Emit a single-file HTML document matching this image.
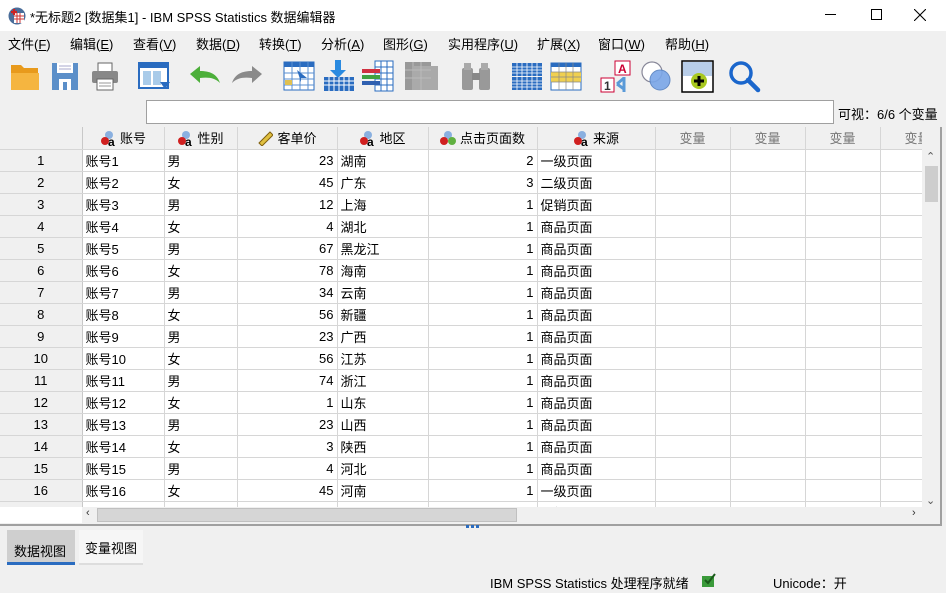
<!DOCTYPE html>
<html><head><meta charset="utf-8"><style>
*{margin:0;padding:0;box-sizing:border-box}
body{width:946px;height:593px;overflow:hidden;background:#f0f0f0;font-family:"Liberation Sans","Noto Sans CJK SC",sans-serif;font-size:13px;color:#000;position:relative}
.a{position:absolute}
#title{left:0;top:0;width:946px;height:31px;background:#fff}
#menu{top:29px;left:0;width:946px;height:24px}
#menu span{position:absolute;top:5px;font-size:13px}
.tb{position:absolute;top:60px}
#grid{left:0;top:127px;width:922px;height:380px;overflow:hidden;background:#fff}
table{border-collapse:collapse;table-layout:fixed;width:940px}
td{height:22px;border-right:1px solid #d6d6d6;border-bottom:1px solid #d6d6d6;padding:0 3px;white-space:nowrap;overflow:hidden;font-size:13px}
td.n{background:#f0f0f0;text-align:center;border-right:1px solid #c8c8c8}
td.r{text-align:right}
tr.h td{background:#f0f0f0;text-align:center;height:22px}
tr.h td.v{color:#777}
.ic{display:inline-block;vertical-align:-3px;margin-right:4px}
</style></head><body>
<div id="title" class="a">
<svg class="a" style="left:8px;top:7px" width="18" height="18"><circle cx="9" cy="9" r="8.5" fill="#4a6d9a"/><rect x="6" y="6" width="10" height="10" fill="#fff"/><path d="M6 9h10M6 12h10M9 6v10M12 6v10" stroke="#c33" stroke-width="1"/><path d="M3 5h6M6 2v6" stroke="#c22" stroke-width="2.2"/></svg>
<span class="a" style="left:30px;top:7px;font-size:13px">*无标题2 [数据集1] - IBM SPSS Statistics 数据编辑器</span>
<span class="a" style="left:825px;top:14px;width:11px;height:1px;background:#000"></span>
<span class="a" style="left:871px;top:9px;width:11px;height:11px;border:1px solid #000"></span>
<svg class="a" style="left:914px;top:9px" width="12" height="12"><path d="M0 0L12 12M12 0L0 12" stroke="#000" stroke-width="1.1"/></svg>
</div>
<div id="menu" class="a">
<span style="left:8px">文件(<u>F</u>)</span><span style="left:70px">编辑(<u>E</u>)</span><span style="left:133px">查看(<u>V</u>)</span><span style="left:196px">数据(<u>D</u>)</span><span style="left:259px">转换(<u>T</u>)</span><span style="left:321px">分析(<u>A</u>)</span><span style="left:383px">图形(<u>G</u>)</span><span style="left:448px">实用程序(<u>U</u>)</span><span style="left:537px">扩展(<u>X</u>)</span><span style="left:598px">窗口(<u>W</u>)</span><span style="left:665px">帮助(<u>H</u>)</span>
</div>
<!-- toolbar -->
<svg class="tb" style="left:10px" width="30" height="32"><path d="M1 5h10l3 3h14v22H1z" fill="#e89a1c"/><path d="M1 13h28v17H1z" fill="#f5b540"/></svg>
<svg class="tb" style="left:51px" width="28" height="32"><rect x="1" y="3" width="26" height="27" fill="#5b8fc9"/><rect x="6" y="3" width="16" height="10" fill="#fff"/><path d="M8 6h12M8 9h12" stroke="#aac"/><rect x="8" y="19" width="12" height="11" fill="#fff"/><rect x="12" y="22" width="4" height="8" fill="#5b8fc9"/></svg>
<svg class="tb" style="left:90px" width="30" height="32"><rect x="8" y="3" width="14" height="9" fill="#fff" stroke="#666"/><rect x="2" y="11" width="26" height="12" rx="2" fill="#888"/><rect x="7" y="19" width="16" height="11" fill="#fff" stroke="#666"/><path d="M9 23h12M9 26h12" stroke="#999"/></svg>
<svg class="tb" style="left:138px" width="33" height="32"><rect x="1" y="3" width="29" height="25" fill="#fff" stroke="#2a6cc0" stroke-width="2"/><rect x="1" y="3" width="29" height="5" fill="#2a6cc0"/><rect x="5" y="11" width="8" height="14" fill="#a9cbe9"/><rect x="15" y="11" width="8" height="14" fill="#a9cbe9"/><path d="M22 22h10l-5 7z" fill="#2a6cc0"/></svg>
<svg class="tb" style="left:188px" width="33" height="32"><path d="M2 14l10-8v5c10 0 17 3 20 12c-5-5-11-6-20-5v5z" fill="#4caf3a"/></svg>
<svg class="tb" style="left:231px" width="33" height="32"><path d="M31 14l-10-8v5c-10 0-17 3-20 12c5-5 11-6 20-5v5z" fill="#8a8a8a"/></svg>
<svg class="tb" style="left:283px" width="32" height="32"><rect x="1" y="2" width="30" height="28" fill="#fff" stroke="#2a6cc0"/><rect x="1" y="2" width="30" height="5" fill="#2a6cc0"/><path d="M1 13h30M1 19h30M1 25h30M9 2v28M17 2v28M25 2v28" stroke="#5a8fd0"/><path d="M14 10l10 8l-6 0v4z" fill="#2a6cc0"/><rect x="2" y="20" width="7" height="5" fill="#e0c050"/></svg>
<svg class="tb" style="left:323px" width="32" height="32"><path d="M12 0h6v10h5l-8 8l-8-8h5z" fill="#2a8ae0"/><rect x="1" y="17" width="30" height="14" fill="#2a6cc0"/><path d="M1 21h30M1 25h30M6 17v14M11 17v14M16 17v14M21 17v14M26 17v14" stroke="#fff"/></svg>
<svg class="tb" style="left:361px" width="33" height="32"><rect x="14" y="1" width="18" height="30" fill="#fff" stroke="#2a6cc0"/><path d="M14 7h18M14 13h18M14 19h18M14 25h18M20 1v30M26 1v30" stroke="#2a6cc0"/><rect x="1" y="9" width="18" height="4" fill="#d03040"/><rect x="1" y="15" width="18" height="4" fill="#40a040"/><rect x="1" y="21" width="18" height="4" fill="#3060b0"/></svg>
<svg class="tb" style="left:404px" width="34" height="32"><rect x="1" y="2" width="26" height="28" fill="#999"/><rect x="10" y="6" width="24" height="24" fill="#aaa"/><path d="M1 10h26M1 18h26M9 2v28M17 2v28" stroke="#bbb"/></svg>
<svg class="tb" style="left:460px" width="32" height="32"><rect x="2" y="8" width="11" height="22" rx="2" fill="#999"/><rect x="19" y="8" width="11" height="22" rx="2" fill="#999"/><rect x="4" y="3" width="7" height="7" fill="#aaa"/><rect x="21" y="3" width="7" height="7" fill="#aaa"/><rect x="12" y="13" width="8" height="7" fill="#888"/></svg>
<svg class="tb" style="left:511px" width="32" height="32"><rect x="1" y="3" width="30" height="13" fill="#2a6cc0"/><rect x="1" y="17" width="30" height="13" fill="#2a6cc0"/><path d="M1 7h30M1 10h30M1 13h30M1 21h30M1 24h30M1 27h30M6 3v27M11 3v27M16 3v27M21 3v27M26 3v27" stroke="#fff" stroke-width=".8"/></svg>
<svg class="tb" style="left:550px" width="32" height="32"><rect x="1" y="3" width="30" height="27" fill="#fff" stroke="#2a6cc0"/><rect x="1" y="3" width="30" height="4" fill="#2a6cc0"/><rect x="1" y="12" width="30" height="10" fill="#f0d050"/><path d="M1 12h30M1 17h30M1 22h30M9 3v27M16 3v27M23 3v27" stroke="#888" stroke-width=".7"/></svg>
<svg class="tb" style="left:600px" width="34" height="34"><rect x="15" y="1" width="15" height="14" fill="#fff" stroke="#c03"/><text x="18" y="13" font-size="12" font-weight="bold" fill="#c03" font-family="Liberation Sans">A</text><rect x="1" y="18" width="13" height="14" fill="#fff" stroke="#c03"/><text x="4" y="30" font-size="12" font-weight="bold" fill="#333" font-family="Liberation Sans">1</text><path d="M24 17v15M17 24l7-6M17 24l7 5" stroke="#5a9ad8" stroke-width="3"/></svg>
<svg class="tb" style="left:640px" width="34" height="34"><circle cx="12" cy="12" r="10" fill="#fff" stroke="#889" stroke-width="1.2"/><circle cx="20" cy="20" r="10" fill="#7aa6e8" stroke="#5580c0" stroke-width="1" opacity=".9"/></svg>
<svg class="tb" style="left:681px" width="33" height="33"><rect x="1" y="1" width="31" height="31" fill="#fff" stroke="#000" stroke-width="1.5"/><rect x="2" y="2" width="29" height="14" fill="#b8cde8"/><circle cx="18" cy="21" r="8" fill="#a8c820"/><path d="M18 16v10M13 21h10" stroke="#000" stroke-width="3"/></svg>
<svg class="tb" style="left:728px" width="34" height="34"><circle cx="13" cy="13" r="10" fill="none" stroke="#1a66cc" stroke-width="3.5"/><path d="M20 20l10 10" stroke="#1a66cc" stroke-width="4.5" stroke-linecap="round"/></svg>
<!-- input row -->
<div class="a" style="left:146px;top:100px;width:688px;height:24px;background:#fff;border:1px solid #a0a0a0"></div>
<span class="a" style="left:838px;top:104px">可视：6/6 个变量</span>
<!-- grid -->
<div id="grid" class="a">
<table>
<colgroup><col style="width:82px"><col style="width:82px"><col style="width:73px"><col style="width:100px"><col style="width:91px"><col style="width:109px"><col style="width:118px"><col style="width:75px"><col style="width:75px"><col style="width:75px"><col style="width:60px"></colgroup>
<tr class="h"><td class="n"></td>
<td><svg class="ic" width="16" height="16"><circle cx="9" cy="5" r="4" fill="#8ab0e0"/><circle cx="5" cy="11" r="4" fill="#d02020"/><text x="8" y="16" font-size="12" font-weight="bold" font-family="Liberation Sans">a</text></svg>账号</td>
<td><svg class="ic" width="16" height="16"><circle cx="9" cy="5" r="4" fill="#8ab0e0"/><circle cx="5" cy="11" r="4" fill="#d02020"/><text x="8" y="16" font-size="12" font-weight="bold" font-family="Liberation Sans">a</text></svg>性别</td>
<td><svg class="ic" width="16" height="16"><path d="M2 13L13 2l3 3L5 16z" fill="#e0c040" stroke="#806010"/></svg>客单价</td>
<td><svg class="ic" width="16" height="16"><circle cx="9" cy="5" r="4" fill="#8ab0e0"/><circle cx="5" cy="11" r="4" fill="#d02020"/><text x="8" y="16" font-size="12" font-weight="bold" font-family="Liberation Sans">a</text></svg>地区</td>
<td><svg class="ic" width="16" height="16"><circle cx="8" cy="5" r="4" fill="#8ab0e0"/><circle cx="4" cy="11" r="4" fill="#d02020"/><circle cx="12" cy="11" r="4" fill="#60b040"/></svg>点击页面数</td>
<td><svg class="ic" width="16" height="16"><circle cx="9" cy="5" r="4" fill="#8ab0e0"/><circle cx="5" cy="11" r="4" fill="#d02020"/><text x="8" y="16" font-size="12" font-weight="bold" font-family="Liberation Sans">a</text></svg>来源</td>
<td class="v">变量</td><td class="v">变量</td><td class="v">变量</td><td class="v" style="text-align:left;padding-left:24px">变量</td></tr>
<tr><td class="n">1</td><td>账号1</td><td>男</td><td class="r">23</td><td>湖南</td><td class="r">2</td><td>一级页面</td><td></td><td></td><td></td><td></td></tr>
<tr><td class="n">2</td><td>账号2</td><td>女</td><td class="r">45</td><td>广东</td><td class="r">3</td><td>二级页面</td><td></td><td></td><td></td><td></td></tr>
<tr><td class="n">3</td><td>账号3</td><td>男</td><td class="r">12</td><td>上海</td><td class="r">1</td><td>促销页面</td><td></td><td></td><td></td><td></td></tr>
<tr><td class="n">4</td><td>账号4</td><td>女</td><td class="r">4</td><td>湖北</td><td class="r">1</td><td>商品页面</td><td></td><td></td><td></td><td></td></tr>
<tr><td class="n">5</td><td>账号5</td><td>男</td><td class="r">67</td><td>黑龙江</td><td class="r">1</td><td>商品页面</td><td></td><td></td><td></td><td></td></tr>
<tr><td class="n">6</td><td>账号6</td><td>女</td><td class="r">78</td><td>海南</td><td class="r">1</td><td>商品页面</td><td></td><td></td><td></td><td></td></tr>
<tr><td class="n">7</td><td>账号7</td><td>男</td><td class="r">34</td><td>云南</td><td class="r">1</td><td>商品页面</td><td></td><td></td><td></td><td></td></tr>
<tr><td class="n">8</td><td>账号8</td><td>女</td><td class="r">56</td><td>新疆</td><td class="r">1</td><td>商品页面</td><td></td><td></td><td></td><td></td></tr>
<tr><td class="n">9</td><td>账号9</td><td>男</td><td class="r">23</td><td>广西</td><td class="r">1</td><td>商品页面</td><td></td><td></td><td></td><td></td></tr>
<tr><td class="n">10</td><td>账号10</td><td>女</td><td class="r">56</td><td>江苏</td><td class="r">1</td><td>商品页面</td><td></td><td></td><td></td><td></td></tr>
<tr><td class="n">11</td><td>账号11</td><td>男</td><td class="r">74</td><td>浙江</td><td class="r">1</td><td>商品页面</td><td></td><td></td><td></td><td></td></tr>
<tr><td class="n">12</td><td>账号12</td><td>女</td><td class="r">1</td><td>山东</td><td class="r">1</td><td>商品页面</td><td></td><td></td><td></td><td></td></tr>
<tr><td class="n">13</td><td>账号13</td><td>男</td><td class="r">23</td><td>山西</td><td class="r">1</td><td>商品页面</td><td></td><td></td><td></td><td></td></tr>
<tr><td class="n">14</td><td>账号14</td><td>女</td><td class="r">3</td><td>陕西</td><td class="r">1</td><td>商品页面</td><td></td><td></td><td></td><td></td></tr>
<tr><td class="n">15</td><td>账号15</td><td>男</td><td class="r">4</td><td>河北</td><td class="r">1</td><td>商品页面</td><td></td><td></td><td></td><td></td></tr>
<tr><td class="n">16</td><td>账号16</td><td>女</td><td class="r">45</td><td>河南</td><td class="r">1</td><td>一级页面</td><td></td><td></td><td></td><td></td></tr>
<tr><td class="n">17</td><td>账号17</td><td>男</td><td class="r">12</td><td>四川</td><td class="r">1</td><td>一级页面</td><td></td><td></td><td></td><td></td></tr>
</table>
</div>
<!-- vertical scrollbar -->
<div class="a" style="left:922px;top:149px;width:18px;height:358px;background:#f0f0f0"></div>
<div class="a" style="left:925px;top:166px;width:13px;height:36px;background:#cdcdcd"></div>
<span class="a" style="left:926px;top:150px;font-size:11px;color:#555">&#8963;</span>
<span class="a" style="left:926px;top:494px;font-size:11px;color:#555">&#8964;</span>
<!-- horizontal scrollbar -->
<div class="a" style="left:0;top:507px;width:940px;height:16px;background:#fff"></div>
<div class="a" style="left:82px;top:507px;width:858px;height:16px;background:#f0f0f0"></div>
<div class="a" style="left:97px;top:508px;width:420px;height:14px;background:#d6d6d6;border:1px solid #c0c0c0"></div>
<span class="a" style="left:86px;top:507px;font-size:11px;color:#333">‹</span>
<span class="a" style="left:912px;top:507px;font-size:11px;color:#333">›</span>
<div class="a" style="left:0;top:524px;width:940px;height:2px;background:#a0a0a0"></div>
<div class="a" style="left:940px;top:127px;width:2px;height:399px;background:#a0a0a0"></div>
<span class="a" style="left:466px;top:525px;width:13px;height:3px;border-top:3px dotted #2a6cc0"></span>
<!-- tabs -->
<div class="a" style="left:7px;top:530px;width:68px;height:35px;background:#cfcfcf;border-bottom:3px solid #2a6cc0"></div>
<span class="a" style="left:14px;top:541px">数据视图</span>
<div class="a" style="left:79px;top:530px;width:64px;height:35px;background:#f6f6f6;border-bottom:2px solid #ddd"></div>
<span class="a" style="left:85px;top:538px">变量视图</span>
<!-- status -->
<div class="a" style="left:0;top:570px;width:946px;height:23px;background:#f0f0f0"></div>
<span class="a" style="left:490px;top:573px">IBM SPSS Statistics 处理程序就绪</span>
<svg class="a" style="left:701px;top:572px" width="16" height="16"><rect x="1" y="4" width="12" height="11" fill="#3a9a3a"/><path d="M4 8l3 3l7-9" stroke="#1a5a1a" stroke-width="2" fill="none"/></svg>
<span class="a" style="left:773px;top:573px">Unicode：开</span>
</body></html>
